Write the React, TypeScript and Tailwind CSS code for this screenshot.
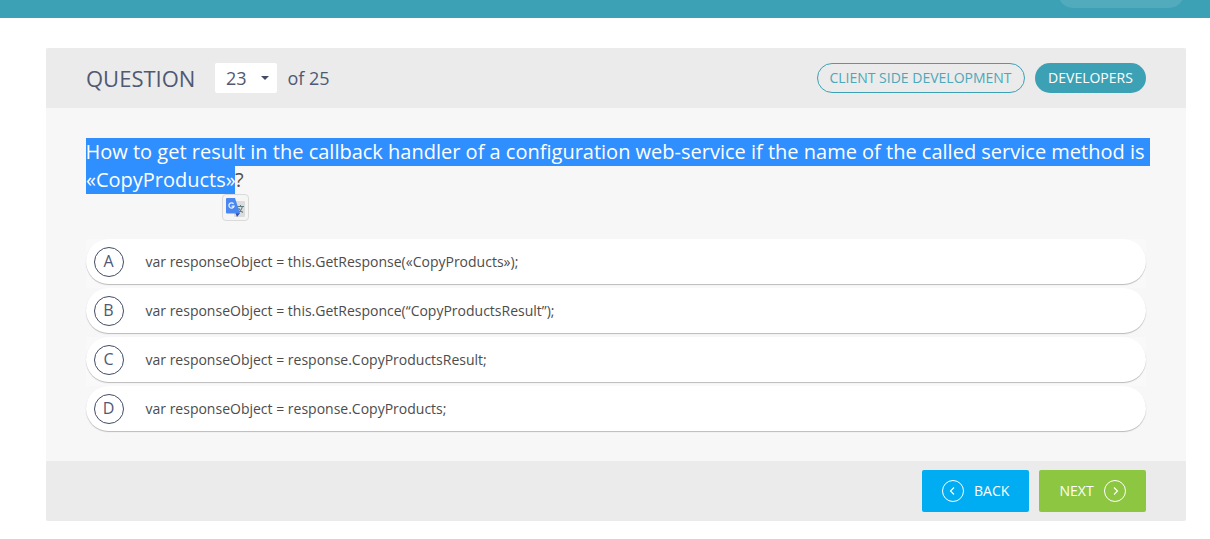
import React from "react";

const options = [
  { letter: "A", text: "var responseObject = this.GetResponse(«CopyProducts»);" },
  { letter: "B", text: "var responseObject = this.GetResponce(“CopyProductsResult”);" },
  { letter: "C", text: "var responseObject = response.CopyProductsResult;" },
  { letter: "D", text: "var responseObject = response.CopyProducts;" },
];

function CircleArrow({ d }: { d: string }) {
  return (
    <svg width="22" height="22" viewBox="0 0 22 22" fill="none" stroke="white" className="shrink-0">
      <circle cx="11" cy="11" r="10.5" />
      <path d={d} strokeWidth="1.1" />
    </svg>
  );
}

function TranslateBadge() {
  return (
    <span className="absolute left-[136px] top-[56px] flex h-[27px] w-[27px] items-center justify-center rounded-[4px] border border-[#dadada] bg-[#f5f5f5]">
      <svg width="19" height="19" viewBox="0 0 19 19">
        <rect x="8" y="3" width="11" height="16" rx="1" fill="#dcdcdc" />
        <path d="M11 8.500h7M14.500 7v1.500M16.500 8.500c-.5 2.500-2 4.500-4 6M12.500 10c1 2 2.500 3.500 4.500 4.500" stroke="#607d84" strokeWidth="1.100" fill="none" />
        <path d="M9.500 15h4.500l-3 4z" fill="#3548ad" />
        <path d="M1 0h8l5 15.500H1a1 1 0 0 1-1-1V1a1 1 0 0 1 1-1z" fill="#4a87f0" />
        <path d="M7.600 5.900A2.600 2.600 0 1 0 8 8.200H5.600" stroke="#e8f0ff" strokeWidth="1.300" fill="none" />
      </svg>
    </span>
  );
}

export default function App() {
  return (
    <div className="h-[539px] overflow-hidden bg-white font-['Open_Sans',sans-serif] text-[#434c67]">
      <header className="flex h-[18px] justify-end bg-[#3da1b5] pr-[26px]">
        <div className="-mt-[22px] h-[30px] w-[126px] rounded-full bg-[#52abbd]" />
      </header>

      <main className="ml-[46px] mt-[30px] w-[1140px] overflow-hidden rounded-[2px] bg-[#f7f7f7]">
        <div className="flex h-[60px] items-center bg-[#ebebeb] px-10 text-[#505973]">
          <h1 className="w-[129px] whitespace-nowrap text-[22px] font-normal leading-[30px]">QUESTION</h1>
          <button className="flex h-[30px] w-[62px] items-center justify-between rounded-[2px] bg-white pl-[11px] pr-2 text-lg">
            <span>23</span>
            <svg width="8" height="4" viewBox="0 0 8 4">
              <path d="M0 0h8L4 4z" fill="#434c67" />
            </svg>
          </button>
          <span className="ml-[10.5px] text-lg">of 25</span>
          <div className="ml-auto flex gap-[10px] text-sm">
            <span className="flex h-[30px] w-[208px] items-center justify-center whitespace-nowrap rounded-full border border-[#3da1b5] pr-px text-[#4ba8ba]">
              CLIENT SIDE DEVELOPMENT
            </span>
            <span className="flex h-[30px] w-[111px] items-center justify-center rounded-full bg-[#3da1b5] text-white">
              DEVELOPERS
            </span>
          </div>
        </div>

        <div className="h-[353px] px-10 pt-[30px]">
          <div className="relative h-[101px] w-[1066px] whitespace-nowrap text-[20px] leading-7 text-[#505050]">
            <div className="h-7 w-[1064px] bg-[#308fff] text-white">
              <span className="-ml-[0.5px]">How to get result in the callback handler of a configuration web-service if the name of the called service method is</span>
            </div>
            <div className="flex h-7">
              <span className="w-[149px] bg-[#308fff] text-white">«CopyProducts»</span>
              <span>?</span>
            </div>
            <TranslateBadge />
          </div>
          <ul>
            {options.map(({ letter, text }) => (
              <li key={letter} className="h-[49px] odd:bg-[#f9f9f9]">
                <div className="flex h-[45px] items-center rounded-full bg-white pl-2 shadow-[0_1px_1px_rgba(0,0,0,0.25)]">
                  <span className="flex h-[30px] w-[30px] items-center justify-center rounded-full border border-[#434c67] pb-px pr-px text-base text-[#505973]">
                    {letter}
                  </span>
                  <span className="ml-[21.5px] text-sm text-[#4c4c4c]">{text}</span>
                </div>
              </li>
            ))}
          </ul>
        </div>

        <footer className="flex h-[60px] items-center justify-end gap-[10px] bg-[#ebebeb] px-10 text-sm text-white">
          <button className="flex h-[42px] w-[107px] items-center gap-[10px] rounded-[2px] bg-[#00adf2] pl-5">
            <CircleArrow d="M12 7.500L8.500 11l3.500 3.500" />
            <span>BACK</span>
          </button>
          <button className="flex h-[42px] w-[107px] items-center justify-between rounded-[2px] bg-[#8dc741] pl-[20.5px] pr-5">
            <span>NEXT</span>
            <CircleArrow d="M10 7.500l3.500 3.500L10 14.500" />
          </button>
        </footer>
      </main>
    </div>
  );
}
